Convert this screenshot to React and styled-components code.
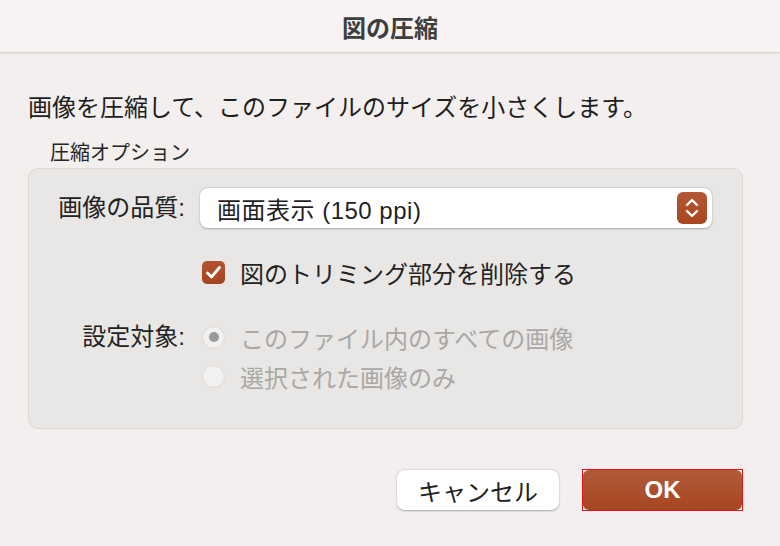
import React from "react";
import styled, { createGlobalStyle } from "styled-components";

const GlobalStyle = createGlobalStyle`
  html, body {
    margin: 0;
    padding: 0;
    background: #f2efee;
  }
  body {
    font-family: "Liberation Sans", "Noto Sans CJK JP", sans-serif;
  }
`;

const Window = styled.div`
  width: 780px;
  height: 546px;
  background: #f2efee;
  display: flex;
  flex-direction: column;
  overflow: hidden;
`;

const TitleBar = styled.div`
  height: 52px;
  flex-shrink: 0;
  background: #f6f3f2;
  border-bottom: 1px solid #d8d5d3;
  box-shadow: 0 1px 2px rgba(0, 0, 0, 0.06);
  display: flex;
  align-items: center;
  justify-content: center;
  font-size: 24px;
  font-weight: 700;
  color: #3e3e3e;
`;

const Content = styled.div`
  padding: 0 37px 0 28px;
  display: flex;
  flex-direction: column;
`;

const Description = styled.p`
  margin: 40px 0 0;
  font-size: 24px;
  line-height: 30px;
  color: #1e1e1e;
`;

const GroupTitle = styled.div`
  margin: 18px 0 0 22px;
  font-size: 20px;
  line-height: 24px;
  color: #262626;
`;

const Group = styled.div`
  margin-top: 3px;
  height: 261px;
  box-sizing: border-box;
  background: #e9e7e5;
  border: 1px solid #dad7d5;
  border-radius: 10px;
  padding: 19px 30px 0 0;
  display: grid;
  grid-template-columns: 156px 1fr;
  column-gap: 17px;
  align-content: start;
`;

const Label = styled.div`
  font-size: 24px;
  color: #232323;
  text-align: right;
  height: ${(p) => p.$h}px;
  line-height: ${(p) => p.$h}px;
  margin-top: ${(p) => p.$mt || 0}px;
  white-space: nowrap;
`;

const Cell = styled.div`
  margin-top: ${(p) => p.$mt || 0}px;
  display: flex;
  flex-direction: column;
  gap: ${(p) => p.$gap || 0}px;
`;

const Select = styled.div`
  height: 40px;
  box-sizing: border-box;
  background: #ffffff;
  border-radius: 8px;
  box-shadow: 0 0.5px 2px rgba(0, 0, 0, 0.3);
  display: flex;
  align-items: center;
  justify-content: space-between;
  padding: 0 5px 0 17px;
  font-size: 24px;
  letter-spacing: 0.5px;
  color: #1f1f1f;
  margin-left: -2px;
`;

const Stepper = styled.div`
  width: 30px;
  height: 32px;
  border-radius: 6px;
  background: linear-gradient(#b45835, #a8461f);
  display: flex;
  align-items: center;
  justify-content: center;
`;

const OptionRow = styled.label`
  display: flex;
  align-items: center;
  gap: 15px;
  font-size: 24px;
  height: 28px;
  color: ${(p) => (p.$disabled ? "#aaa7a5" : "#232323")};
`;

const Checkbox = styled.span`
  width: 23px;
  height: 23px;
  border-radius: 5px;
  background: linear-gradient(#b15433, #a6441f);
  display: flex;
  align-items: center;
  justify-content: center;
  flex-shrink: 0;
`;

const Radio = styled.span`
  width: 23px;
  height: 23px;
  box-sizing: border-box;
  border-radius: 50%;
  background: #f3f1f0;
  border: 1px solid #dcd9d7;
  display: flex;
  align-items: center;
  justify-content: center;
  flex-shrink: 0;

  &::after {
    content: "";
    width: 10px;
    height: 10px;
    border-radius: 50%;
    background: ${(p) => (p.$checked ? "#9c9a99" : "transparent")};
  }
`;

const Footer = styled.div`
  display: flex;
  justify-content: flex-end;
  align-items: center;
  gap: 23px;
  margin-top: 40px;
`;

const Button = styled.button`
  width: ${(p) => p.$w}px;
  height: 40px;
  border-radius: 8px;
  font-family: inherit;
  font-size: 24px;
  cursor: pointer;
  display: flex;
  align-items: center;
  justify-content: center;
  padding: 0;
  border: none;
  background: #ffffff;
  color: #222;
  box-shadow: 0 0.5px 2px rgba(0, 0, 0, 0.3);
`;

const PrimaryButton = styled(Button)`
  background: linear-gradient(#b15b3b, #a6461f);
  color: #ffffff;
  font-weight: 700;
  border-radius: 6px;
  box-shadow: none;
`;

const FocusFrame = styled.span`
  display: flex;
  border: 1px solid #e8121a;
  padding: 0;
`;

function StepperIcon() {
  return (
    <svg width="16" height="22" viewBox="0 0 16 22">
      <path
        d="M3 8 L8 3 L13 8 M3 14 L8 19 L13 14"
        fill="none"
        stroke="#fff"
        strokeWidth="2.4"
        strokeLinecap="round"
        strokeLinejoin="round"
      />
    </svg>
  );
}

function CheckIcon() {
  return (
    <svg width="17" height="15" viewBox="0 0 17 15">
      <path
        d="M2.5 8 L6.5 12 L14.5 2.5"
        fill="none"
        stroke="#fff"
        strokeWidth="2.8"
        strokeLinecap="round"
        strokeLinejoin="round"
      />
    </svg>
  );
}

export default function App() {
  return (
    <>
      <GlobalStyle />
      <Window>
        <TitleBar>図の圧縮</TitleBar>
        <Content>
          <Description>画像を圧縮して、このファイルのサイズを小さくします。</Description>
          <GroupTitle>圧縮オプション</GroupTitle>
          <Group>
            <Label $h={40}>画像の品質:</Label>
            <Cell>
              <Select>
                <span>画面表示 (150 ppi)</span>
                <Stepper>
                  <StepperIcon />
                </Stepper>
              </Select>
            </Cell>

            <div />
            <Cell $mt={30}>
              <OptionRow>
                <Checkbox>
                  <CheckIcon />
                </Checkbox>
                図のトリミング部分を削除する
              </OptionRow>
            </Cell>

            <Label $h={28} $mt={37}>設定対象:</Label>
            <Cell $mt={37} $gap={11}>
              <OptionRow $disabled>
                <Radio $checked />
                このファイル内のすべての画像
              </OptionRow>
              <OptionRow $disabled>
                <Radio />
                選択された画像のみ
              </OptionRow>
            </Cell>
          </Group>
          <Footer>
            <Button $w={162}>キャンセル</Button>
            <FocusFrame>
              <PrimaryButton $w={159}>OK</PrimaryButton>
            </FocusFrame>
          </Footer>
        </Content>
      </Window>
    </>
  );
}
